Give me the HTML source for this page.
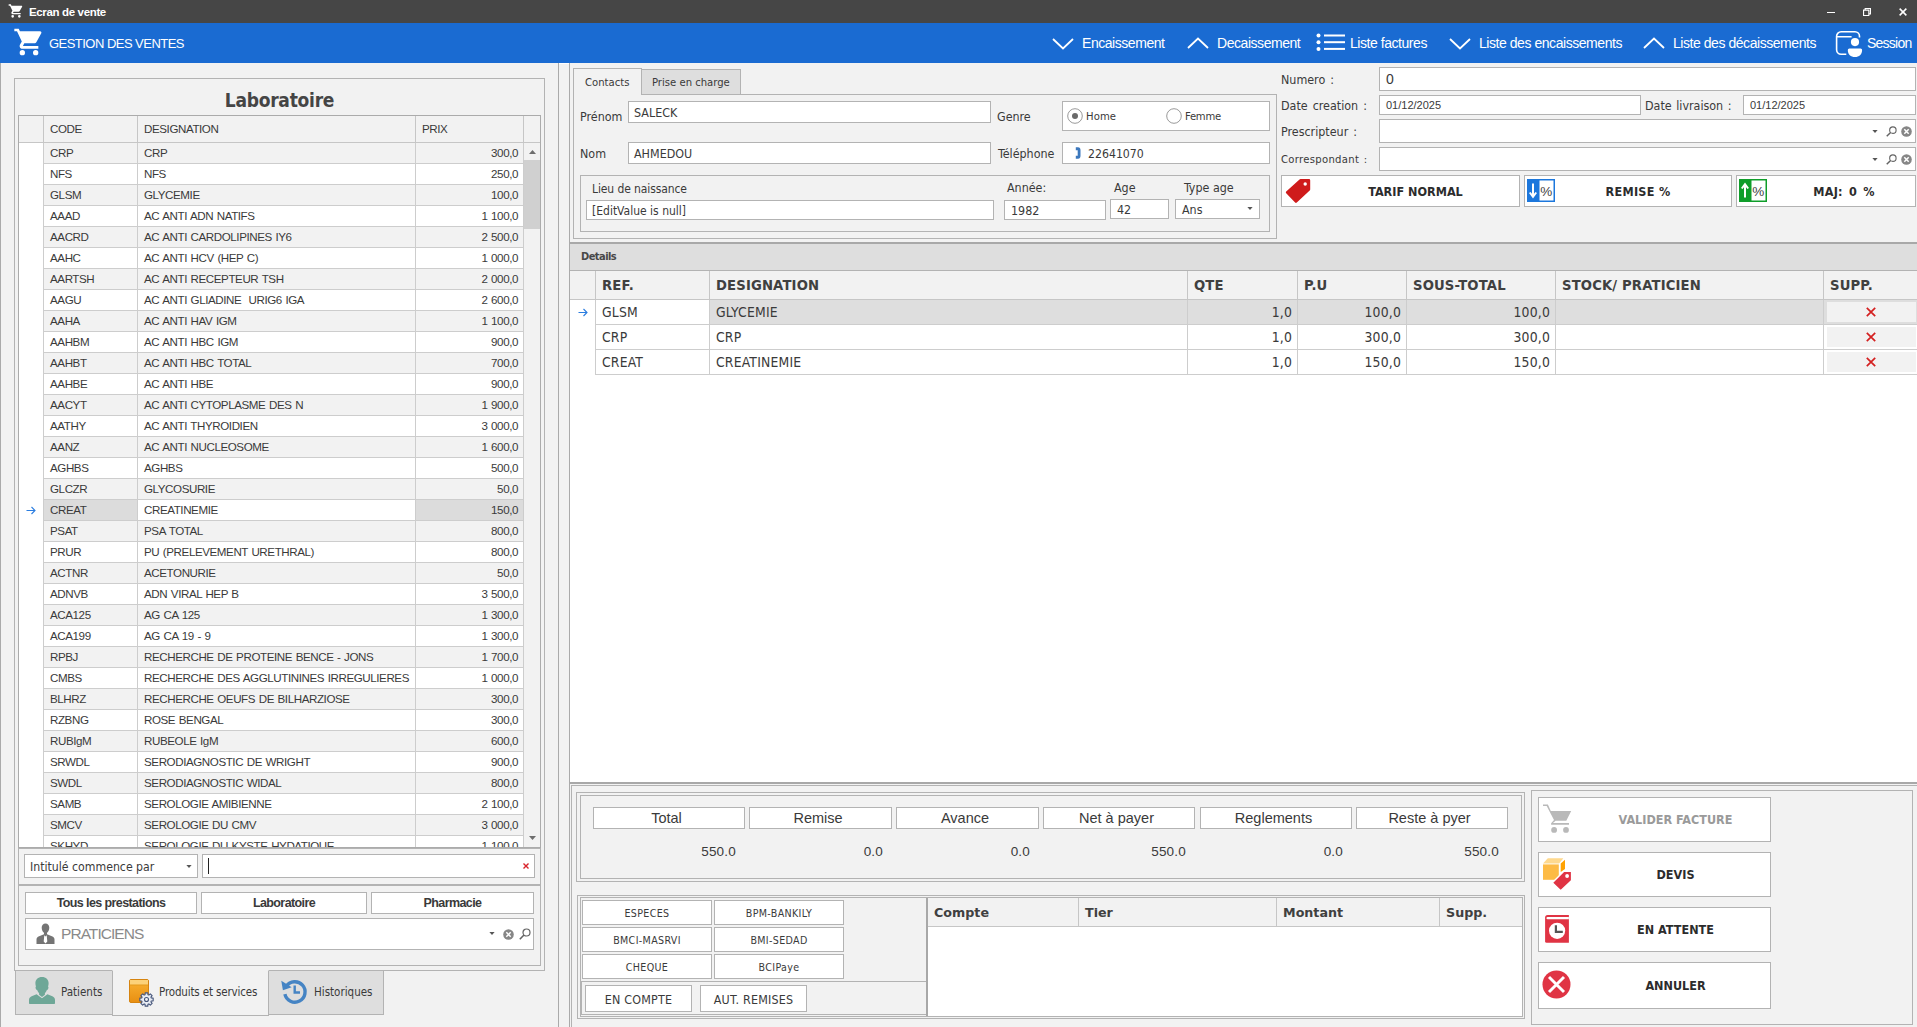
<!DOCTYPE html>
<html lang="fr">
<head>
<meta charset="utf-8">
<title>Ecran de vente</title>
<style>
*{box-sizing:border-box;margin:0;padding:0}
html,body{width:1917px;height:1027px;overflow:hidden;background:#f2f2f2}
body{position:relative;font-family:"Liberation Sans",sans-serif;color:#3a3a3a;font-size:12px}
i{font-style:normal}
.a{position:absolute}
.sg{font-family:"Liberation Sans",sans-serif}
.th{font-family:"DejaVu Sans Condensed","Liberation Sans",sans-serif}
.tb{font-family:"DejaVu Sans","Liberation Sans",sans-serif}
.lb.th{margin-top:1px}
.in.th{padding-top:1px}
.bx{position:absolute;border:1px solid #b3b3b3}
.in{position:absolute;border:1px solid #b3b3b3;background:#fff;white-space:nowrap;overflow:hidden}
svg{position:absolute;overflow:visible}
/* title + header */
#tb{left:0;top:0;width:1917px;height:23px;background:#464646}
#tb .t{left:29px;top:1px;line-height:23px;color:#fff;font-weight:bold;font-size:11.5px;letter-spacing:-0.35px}
#hb{left:0;top:23px;width:1917px;height:40px;background:#1a6bd2;color:#fff}
#hb .t{top:0;line-height:40px;font-size:14px;white-space:nowrap;letter-spacing:-0.45px}
/* left panel */
#lp{left:0;top:63px;width:559px;height:970px;border-left:1px solid #aaa;border-right:1px solid #aaa}
#gb{left:14px;top:78px;width:531px;height:893px}
#ttl{left:14px;top:86px;width:531px;text-align:center;font-weight:bold;font-size:19px;letter-spacing:-0.25px;line-height:28px;color:#454545;font-family:"DejaVu Sans Condensed","Liberation Sans",sans-serif}
#lg{left:18px;top:115px;width:523px;height:733px;border:1px solid #ababab;background:#fff;overflow:hidden}
#lg .hd{position:absolute;left:0;top:0;width:521px;height:27px;background:#f2f2f2;border-bottom:1px solid #c6c6c6}
#lg .hd i{position:absolute;top:0;height:26px;line-height:25px;border-left:1px solid #c6c6c6;padding-left:6px;font-size:11.6px;letter-spacing:-0.42px}
#lg .r{position:absolute;left:24px;width:481px;height:21px;border-bottom:1px solid #cdcdcd;font-size:11.6px;letter-spacing:-0.42px;word-spacing:0.8px;line-height:20px;white-space:nowrap}
#lg .r.e{background:#f2f2f2}
#lg .r.o{background:#fff}
#lg .r i{position:absolute;top:0;height:20px;border-left:1px solid #cdcdcd;padding-left:6px}
#lg .c1{left:0;width:94px}
#lg .c2{left:94px;width:278px}
#lg .c3{left:372px;width:109px;text-align:right;padding-right:5px;border-right:1px solid #cdcdcd}
#lg .r.f .c1,#lg .r.f .c3{background:#dcdcdc}
#lg .r.f .c2{background:#fff}
.btn{position:absolute;border:1px solid #b3b3b3;background:#fff;text-align:center;white-space:nowrap}
/* details grid */
.dh{position:absolute;top:271px;height:28px;line-height:29px;border-left:1px solid #c6c6c6;padding-left:6px;font-weight:bold;font-size:13.2px;letter-spacing:0.15px;color:#404040;white-space:nowrap}
.dr{position:absolute;left:595px;width:1322px;height:25px;border-bottom:1px solid #cdcdcd;font-size:13.8px;letter-spacing:0.2px;line-height:24px;white-space:nowrap}
.dr i{position:absolute;top:0;height:24px;border-left:1px solid #cdcdcd;padding-left:6px}
.dr .n{text-align:right;padding-right:5px}
.dr .xb{position:absolute;left:1232px;top:2px;width:89px;height:20px;background:#f2f2f2}
.lb{position:absolute;white-space:nowrap;font-size:12px}
.tot{position:absolute;top:807px;height:22px;border:1px solid #b3b3b3;background:#fff;text-align:center;font-size:14.5px;line-height:21px;letter-spacing:0;padding-right:5px}
.tv{position:absolute;top:842px;height:20px;line-height:20px;font-size:13.5px;letter-spacing:0.2px;text-align:right;white-space:nowrap}
.pb{position:absolute;height:25px;width:130px;border:1px solid #b3b3b3;background:#fff;text-align:center;font-size:10.6px;letter-spacing:0.35px;line-height:25px;white-space:nowrap}
.bb{position:absolute;left:1538px;width:233px;border:1px solid #b3b3b3;background:#fff}
.bb b{position:absolute;left:42px;right:0;top:0;text-align:center;font-size:12.5px;white-space:nowrap}
</style>
</head>
<body>
<!-- ===== title bar ===== -->
<div id="tb" class="a">
<svg style="left:8px;top:3px" width="16" height="16" viewBox="0 0 24 24"><path fill="#fff" d="M7 18a2 2 0 1 0 0 4 2 2 0 0 0 0-4zM1 2v2h2l3.6 7.6-1.4 2.4c-.7 1.4.3 3 1.8 3h12v-2H7.4l1.1-2h7.4c.8 0 1.400-.4 1.700-1l3.600-6.500c.4-.700-.100-1.500-.900-1.500H5.200L4.300 2H1zm16 16a2 2 0 1 0 0 4 2 2 0 0 0 0-4z"/></svg>
<div class="a t">Ecran de vente</div>
<svg style="left:1827px;top:12px" width="8" height="1"><rect width="8" height="1" fill="#fff"/></svg>
<svg style="left:1863px;top:8px" width="8" height="8" viewBox="0 0 10 10"><path d="M0.700 2.700h6.600v6.600h-6.600zM2.700 2.700v-2h6.600v6.600h-2" fill="none" stroke="#fff" stroke-width="1.400"/></svg>
<svg style="left:1899px;top:8px" width="8" height="8" viewBox="0 0 10 10"><path d="M0.800 0.800l8.400 8.400M9.200 0.800l-8.400 8.400" stroke="#fff" stroke-width="1.900" fill="none"/></svg>
</div>
<!-- ===== blue header ===== -->
<div id="hb" class="a">
<svg style="left:13px;top:3px" width="32" height="32" viewBox="0 0 24 24"><path fill="#fff" d="M7 18a2 2 0 1 0 0 4 2 2 0 0 0 0-4zM1 2v2h2l3.6 7.6-1.4 2.4c-.7 1.4.3 3 1.8 3h12v-2H7.4l1.1-2h7.4c.8 0 1.400-.4 1.700-1l3.600-6.500c.4-.700-.100-1.500-.900-1.500H5.200L4.300 2H1zm16 16a2 2 0 1 0 0 4 2 2 0 0 0 0-4z"/></svg>
<div class="a t" style="left:49px;top:1px;font-size:13px;letter-spacing:-0.53px">GESTION DES VENTES</div>
<svg style="left:1052px;top:15px" width="22" height="12" viewBox="0 0 22 12"><path d="M1 1l10 9.500L21 1" fill="none" stroke="#fff" stroke-width="1.800"/></svg>
<div class="a t" style="left:1082px">Encaissement</div>
<svg style="left:1187px;top:14px" width="22" height="12" viewBox="0 0 22 12"><path d="M1 11l10-9.500L21 11" fill="none" stroke="#fff" stroke-width="1.800"/></svg>
<div class="a t" style="left:1217px">Decaissement</div>
<svg style="left:1316px;top:10px" width="30" height="20" viewBox="0 0 30 20"><g fill="#fff"><circle cx="2.500" cy="2.500" r="2"/><circle cx="2.500" cy="9.200" r="2"/><circle cx="2.500" cy="15.900" r="2"/><rect x="8" y="1.500" width="21" height="2"/><rect x="8" y="8.200" width="21" height="2"/><rect x="8" y="14.900" width="21" height="2"/></g></svg>
<div class="a t" style="left:1350px">Liste factures</div>
<svg style="left:1449px;top:15px" width="22" height="12" viewBox="0 0 22 12"><path d="M1 1l10 9.500L21 1" fill="none" stroke="#fff" stroke-width="1.800"/></svg>
<div class="a t" style="left:1479px">Liste des encaissements</div>
<svg style="left:1643px;top:14px" width="22" height="12" viewBox="0 0 22 12"><path d="M1 11l10-9.500L21 11" fill="none" stroke="#fff" stroke-width="1.800"/></svg>
<div class="a t" style="left:1673px">Liste des décaissements</div>
<svg style="left:1835px;top:7px" width="28" height="28" viewBox="0 0 28 28"><path d="M11.300 24.200H6.100a4.500 4.500 0 0 1-4.500-4.500V6.300a4.500 4.500 0 0 1 4.500-4.500H20a4.500 4.500 0 0 1 4.500 4.500v1.200M1.600 6.700h15" fill="none" stroke="#fff" stroke-width="1.600"/><circle cx="20" cy="12.100" r="4.100" fill="#fff"/><path d="M14.300 18.400h11.300a1.500 1.500 0 0 1 1.500 1.500c0 4.500-3 7.100-7.150 7.100s-7.150-2.600-7.150-7.100a1.500 1.500 0 0 1 1.500-1.500z" fill="#fff"/></svg>
<div class="a t" style="left:1867px;letter-spacing:-0.75px">Session</div>
</div>

<!-- ===== LEFT PANEL ===== -->
<div id="lp" class="a"></div>
<div id="gb" class="bx"></div>
<div id="ttl" class="a">Laboratoire</div>
<div id="lg" class="a">
<div class="hd"><i style="left:24px;width:94px">CODE</i><i style="left:118px;width:278px">DESIGNATION</i><i style="left:396px;width:108px">PRIX</i><i style="left:504px;width:17px"></i></div>
<div class="r e" style="top:27px"><i class="c1">CRP</i><i class="c2">CRP</i><i class="c3">300,0</i></div>
<div class="r o" style="top:48px"><i class="c1">NFS</i><i class="c2">NFS</i><i class="c3">250,0</i></div>
<div class="r e" style="top:69px"><i class="c1">GLSM</i><i class="c2">GLYCEMIE</i><i class="c3">100,0</i></div>
<div class="r o" style="top:90px"><i class="c1">AAAD</i><i class="c2">AC ANTI ADN NATIFS</i><i class="c3">1 100,0</i></div>
<div class="r e" style="top:111px"><i class="c1">AACRD</i><i class="c2">AC ANTI CARDOLIPINES IY6</i><i class="c3">2 500,0</i></div>
<div class="r o" style="top:132px"><i class="c1">AAHC</i><i class="c2">AC ANTI HCV (HEP C)</i><i class="c3">1 000,0</i></div>
<div class="r e" style="top:153px"><i class="c1">AARTSH</i><i class="c2">AC ANTI RECEPTEUR TSH</i><i class="c3">2 000,0</i></div>
<div class="r o" style="top:174px"><i class="c1">AAGU</i><i class="c2">AC ANTI GLIADINE&nbsp; URIG6 IGA</i><i class="c3">2 600,0</i></div>
<div class="r e" style="top:195px"><i class="c1">AAHA</i><i class="c2">AC ANTI HAV IGM</i><i class="c3">1 100,0</i></div>
<div class="r o" style="top:216px"><i class="c1">AAHBM</i><i class="c2">AC ANTI HBC IGM</i><i class="c3">900,0</i></div>
<div class="r e" style="top:237px"><i class="c1">AAHBT</i><i class="c2">AC ANTI HBC TOTAL</i><i class="c3">700,0</i></div>
<div class="r o" style="top:258px"><i class="c1">AAHBE</i><i class="c2">AC ANTI HBE</i><i class="c3">900,0</i></div>
<div class="r e" style="top:279px"><i class="c1">AACYT</i><i class="c2">AC ANTI CYTOPLASME DES N</i><i class="c3">1 900,0</i></div>
<div class="r o" style="top:300px"><i class="c1">AATHY</i><i class="c2">AC ANTI THYROIDIEN</i><i class="c3">3 000,0</i></div>
<div class="r e" style="top:321px"><i class="c1">AANZ</i><i class="c2">AC ANTI NUCLEOSOME</i><i class="c3">1 600,0</i></div>
<div class="r o" style="top:342px"><i class="c1">AGHBS</i><i class="c2">AGHBS</i><i class="c3">500,0</i></div>
<div class="r e" style="top:363px"><i class="c1">GLCZR</i><i class="c2">GLYCOSURIE</i><i class="c3">50,0</i></div>
<div class="r o f" style="top:384px"><i class="c1">CREAT</i><i class="c2">CREATINEMIE</i><i class="c3">150,0</i></div>
<div class="r e" style="top:405px"><i class="c1">PSAT</i><i class="c2">PSA TOTAL</i><i class="c3">800,0</i></div>
<div class="r o" style="top:426px"><i class="c1">PRUR</i><i class="c2">PU (PRELEVEMENT URETHRAL)</i><i class="c3">800,0</i></div>
<div class="r e" style="top:447px"><i class="c1">ACTNR</i><i class="c2">ACETONURIE</i><i class="c3">50,0</i></div>
<div class="r o" style="top:468px"><i class="c1">ADNVB</i><i class="c2">ADN VIRAL HEP B</i><i class="c3">3 500,0</i></div>
<div class="r e" style="top:489px"><i class="c1">ACA125</i><i class="c2">AG CA 125</i><i class="c3">1 300,0</i></div>
<div class="r o" style="top:510px"><i class="c1">ACA199</i><i class="c2">AG CA 19 - 9</i><i class="c3">1 300,0</i></div>
<div class="r e" style="top:531px"><i class="c1">RPBJ</i><i class="c2">RECHERCHE DE PROTEINE BENCE - JONS</i><i class="c3">1 700,0</i></div>
<div class="r o" style="top:552px"><i class="c1">CMBS</i><i class="c2">RECHERCHE DES AGGLUTININES IRREGULIERES</i><i class="c3">1 000,0</i></div>
<div class="r e" style="top:573px"><i class="c1">BLHRZ</i><i class="c2">RECHERCHE OEUFS DE BILHARZIOSE</i><i class="c3">300,0</i></div>
<div class="r o" style="top:594px"><i class="c1">RZBNG</i><i class="c2">ROSE BENGAL</i><i class="c3">300,0</i></div>
<div class="r e" style="top:615px"><i class="c1">RUBIgM</i><i class="c2">RUBEOLE IgM</i><i class="c3">600,0</i></div>
<div class="r o" style="top:636px"><i class="c1">SRWDL</i><i class="c2">SERODIAGNOSTIC DE WRIGHT</i><i class="c3">900,0</i></div>
<div class="r e" style="top:657px"><i class="c1">SWDL</i><i class="c2">SERODIAGNOSTIC WIDAL</i><i class="c3">800,0</i></div>
<div class="r o" style="top:678px"><i class="c1">SAMB</i><i class="c2">SEROLOGIE AMIBIENNE</i><i class="c3">2 100,0</i></div>
<div class="r e" style="top:699px"><i class="c1">SMCV</i><i class="c2">SEROLOGIE DU CMV</i><i class="c3">3 000,0</i></div>
<div class="r o" style="top:720px"><i class="c1">SKHYD</i><i class="c2">SEROLOGIE DU KYSTE HYDATIQUE</i><i class="c3">1 100,0</i></div>
<svg style="left:7px;top:390px" width="10" height="9" viewBox="0 0 10 9"><path d="M0.500 4.500h8.500M5.500 1l3.500 3.500-3.500 3.500" fill="none" stroke="#2b7de0" stroke-width="1.100"/></svg>
<!-- scrollbar -->
<div class="a" style="left:505px;top:27px;width:17px;height:705px;background:#f2f2f2"></div>
<div class="a" style="left:505px;top:44px;width:17px;height:69px;background:#d0d0d0"></div>
<svg style="left:510px;top:34px" width="7" height="4" viewBox="0 0 9 5"><path d="M0 5l4.500-5L9 5z" fill="#6e6e6e"/></svg>
<svg style="left:510px;top:720px" width="7" height="4" viewBox="0 0 9 5"><path d="M0 0l4.500 5L9 0z" fill="#6e6e6e"/></svg>
</div>
<!-- search panel -->
<div class="bx" style="left:18px;top:848px;width:523px;height:37px"></div>
<div class="in th" style="left:24px;top:854px;width:174px;height:24px;font-size:12.200px;line-height:22px;padding-left:5px">Intitulé commence par</div>
<svg style="left:186px;top:865px" width="6" height="3" viewBox="0 0 7 4"><path d="M0 0h7L3.500 4z" fill="#555"/></svg>
<div class="in" style="left:202px;top:854px;width:333px;height:24px"></div>
<div class="a" style="left:208px;top:858px;width:1px;height:16px;background:#222"></div>
<svg style="left:523px;top:863px" width="6" height="6" viewBox="0 0 6 6"><path d="M0.500 0.500l5 5M5.500 0.500l-5 5" stroke="#d8232a" stroke-width="1.400" fill="none"/></svg>
<!-- category panel -->
<div class="bx" style="left:18px;top:885px;width:523px;height:81px"></div>
<div class="btn" style="left:25px;top:892px;width:172px;height:22px;font-weight:bold;font-size:12.5px;line-height:20px;letter-spacing:-0.6px">Tous les prestations</div>
<div class="btn" style="left:201px;top:892px;width:166px;height:22px;font-weight:bold;font-size:12.5px;line-height:20px;letter-spacing:-0.6px">Laboratoire</div>
<div class="btn" style="left:371px;top:892px;width:163px;height:22px;font-weight:bold;font-size:12.5px;line-height:20px;letter-spacing:-0.6px">Pharmacie</div>
<div class="in" style="left:25px;top:918px;width:509px;height:32px;font-size:15.5px;line-height:30px;padding-left:35px;color:#8a8a8a;letter-spacing:-0.95px">PRATICIENS</div>
<svg style="left:36px;top:923px" width="19" height="22" viewBox="0 0 19 22"><path fill="#747474" d="M9.500 0.500c2.300 0 3.800 1.700 3.800 4.200 0 2-1 4.300-2.300 5.100v1.500l5.500 2.200c1.200.5 2 1.600 2 2.900V21H0.500v-4.600c0-1.300.8-2.400 2-2.900L8 11.300V9.800C6.700 9 5.700 6.700 5.700 4.700c0-2.500 1.500-4.200 3.800-4.200z"/><path d="M8.300 12.200l1.200 1.300 1.200-1.300 0.600 6.300-1.800 2-1.800-2z" fill="#fff"/></svg>
<svg style="left:489px;top:932px" width="6" height="3" viewBox="0 0 7 4"><path d="M0 0h7L3.500 4z" fill="#555"/></svg>
<svg style="left:503px;top:929px" width="11" height="11" viewBox="0 0 11 11"><circle cx="5.500" cy="5.500" r="5.300" fill="#868686"/><path d="M3.300 3.300l4.400 4.400M7.700 3.300l-4.400 4.400" stroke="#fff" stroke-width="1.500"/></svg>
<svg style="left:519px;top:928px" width="12" height="12" viewBox="0 0 12 12"><circle cx="7.500" cy="4.500" r="3.500" fill="none" stroke="#636363" stroke-width="1.200"/><path d="M5 7L0.800 11.200" stroke="#636363" stroke-width="1.600"/></svg>
<!-- bottom tabs -->
<div class="a" style="left:15px;top:970px;width:98px;height:45px;background:#dedede;border:1px solid #b3b3b3"></div>
<div class="a" style="left:268px;top:970px;width:116px;height:45px;background:#dedede;border:1px solid #b3b3b3"></div>
<div class="a" style="left:112px;top:970px;width:157px;height:46px;background:#f2f2f2;border:1px solid #b3b3b3;border-top-color:#f2f2f2"></div>
<svg style="left:28px;top:976px" width="28" height="29" viewBox="0 0 28 29"><path fill="#6ea797" d="M14 1c4 0 6.600 2.600 6.600 6.200 0 1.300-.2 2.300-.6 3.400.5.300.6 1.200.2 2.100-.3.800-.8 1.300-1.300 1.400-.5 1.300-1.200 2.400-2 3.100v1.600l-2.900 2.200-2.900-2.200v-1.600c-.8-.700-1.500-1.800-2-3.100-.5-.100-1-.6-1.300-1.400-.4-.900-.3-1.800.2-2.100-.4-1.100-.6-2.100-.6-3.400C7.400 3.600 10 1 14 1zM8.600 18.200l5.400 4.100 5.400-4.100 5 2c1.600.7 2.600 2.100 2.600 3.800v3c0 .6-.4 1-1 1H2c-.6 0-1-.4-1-1v-3c0-1.700 1-3.100 2.600-3.800z"/></svg>
<div class="lb th" style="left:61px;top:983px;font-size:11.5px;line-height:16px">Patients</div>
<svg style="left:127px;top:977px" width="28" height="31" viewBox="0 0 28 31"><defs><linearGradient id="og" x1="0" y1="0" x2="0" y2="1"><stop offset="0" stop-color="#f9b233"/><stop offset="1" stop-color="#e88f12"/></linearGradient></defs><rect x="2.500" y="2.500" width="19" height="23" rx="1.500" fill="url(#og)" stroke="#d68410" stroke-width="1"/><rect x="3" y="3" width="18" height="5" fill="#fcd27a"/><rect x="3" y="7.500" width="18" height="1" fill="#e39a1c"/><path d="M24.29 21.07L26.17 21.17L26.17 23.83L24.29 23.93L23.90 24.87L25.15 26.28L23.28 28.15L21.87 26.90L20.93 27.29L20.83 29.17L18.17 29.17L18.07 27.29L17.13 26.90L15.72 28.15L13.85 26.28L15.10 24.87L14.71 23.93L12.83 23.83L12.83 21.17L14.71 21.07L15.10 20.13L13.85 18.72L15.72 16.85L17.13 18.10L18.07 17.71L18.17 15.83L20.83 15.83L20.93 17.71L21.87 18.10L23.28 16.85L25.15 18.72L23.90 20.13z" fill="#e9edf4" stroke="#45557a" stroke-width="1.100" stroke-linejoin="round"/><circle cx="19.500" cy="22.500" r="2" fill="#f2f2f2" stroke="#45557a" stroke-width="1.100"/></svg>
<div class="lb th" style="left:159px;top:983px;font-size:11.500px;line-height:16px;letter-spacing:-0.15px">Produits et services</div>
<svg style="left:281px;top:978px" width="27" height="27" viewBox="0 0 27 27"><path d="M5.400 8.300A10.200 10.200 0 1 1 3.900 16.200" fill="none" stroke="#4584c4" stroke-width="3.400"/><path d="M0.300 2.800l1.600 9.400 8.800-3z" fill="#4584c4"/><path d="M13.700 7.500v7h5.300" fill="none" stroke="#4584c4" stroke-width="2.400"/></svg>
<div class="lb th" style="left:314px;top:983px;font-size:11.500px;line-height:16px">Historiques</div>

<!-- ===== RIGHT PANEL ===== -->
<div class="a" style="left:559px;top:63px;width:10px;height:1px;background:#fff"></div>
<div class="a" style="left:569px;top:63px;width:1px;height:964px;background:#aaa"></div>
<!-- contact tabs -->
<div class="a" style="left:641px;top:69px;width:100px;height:26px;background:#dedede;border:1px solid #b3b3b3"></div>
<div class="bx" style="left:573px;top:94px;width:704px;height:145px"></div>
<div class="a" style="left:573px;top:68px;width:69px;height:26px;background:#f2f2f2;border:1px solid #b3b3b3;border-bottom:none"></div><div class="a" style="left:574px;top:94px;width:67px;height:1px;background:#f2f2f2"></div>
<div class="lb th" style="left:585px;top:74px;font-size:11.2px;line-height:16px">Contacts</div>
<div class="lb th" style="left:652px;top:74px;font-size:11.2px;line-height:16px">Prise en charge</div>
<div class="lb th" style="left:580px;top:108px;font-size:12.4px;line-height:16px">Prénom</div>
<div class="in th" style="left:628px;top:101px;width:363px;height:22px;font-size:12.4px;line-height:20px;padding-left:5px">SALECK</div>
<div class="lb th" style="left:997px;top:108px;font-size:12.4px;line-height:16px">Genre</div>
<div class="in" style="left:1062px;top:101px;width:208px;height:30px"></div>
<svg style="left:1067px;top:108px" width="16" height="16" viewBox="0 0 16 16"><circle cx="8" cy="8" r="7.300" fill="#fff" stroke="#9a9a9a" stroke-width="1"/><circle cx="8" cy="8" r="3" fill="#6a6a6a"/></svg>
<div class="lb th" style="left:1086px;top:108px;font-size:11.2px;line-height:16px;letter-spacing:0.1px">Home</div>
<svg style="left:1166px;top:108px" width="16" height="16" viewBox="0 0 16 16"><circle cx="8" cy="8" r="7.300" fill="#fff" stroke="#9a9a9a" stroke-width="1"/></svg>
<div class="lb th" style="left:1185px;top:108px;font-size:11.2px;line-height:16px;letter-spacing:-0.25px">Femme</div>
<div class="lb th" style="left:580px;top:145px;font-size:12.4px;line-height:16px">Nom</div>
<div class="in th" style="left:628px;top:142px;width:363px;height:22px;font-size:12.4px;line-height:20px;padding-left:5px">AHMEDOU</div>
<div class="lb th" style="left:998px;top:145px;font-size:12.4px;line-height:16px">Téléphone</div>
<div class="in th" style="left:1062px;top:142px;width:208px;height:22px;font-size:12.2px;line-height:20px;padding-left:25px">22641070</div>
<svg style="left:1075px;top:147px" width="6" height="12" viewBox="0 0 6 12"><path d="M0.800 0.300h2.200q2.500 0.200 2.500 3v5.400q0 2.800-2.500 3H0.800V8.700h1.900V3.300H0.800z" fill="#3c78bd"/></svg>
<div class="bx" style="left:580px;top:175px;width:690px;height:57px"></div>
<div class="lb th" style="left:592px;top:180px;font-size:12px;letter-spacing:-0.1px;line-height:16px">Lieu de naissance</div>
<div class="in th" style="left:586px;top:200px;width:408px;height:20px;font-size:12px;line-height:18px;padding-left:5px">[EditValue is null]</div>
<div class="lb th" style="left:1007px;top:179px;font-size:12.4px;line-height:16px">Année:</div>
<div class="in th" style="left:1004px;top:200px;width:102px;height:20px;font-size:12.4px;line-height:18px;padding-left:6px">1982</div>
<div class="lb th" style="left:1114px;top:179px;font-size:12.4px;line-height:16px">Age</div>
<div class="in th" style="left:1110px;top:199px;width:59px;height:20px;font-size:12.4px;line-height:18px;padding-left:6px">42</div>
<div class="lb th" style="left:1184px;top:179px;font-size:12.4px;line-height:16px">Type age</div>
<div class="in th" style="left:1175px;top:199px;width:85px;height:20px;font-size:12.4px;line-height:18px;padding-left:6px">Ans</div>
<svg style="left:1247px;top:207px" width="6" height="3" viewBox="0 0 7 4"><path d="M0 0h7L3.500 4z" fill="#555"/></svg>
<!-- right column -->
<div class="lb th" style="left:1281px;top:71px;font-size:12.4px;line-height:16px;word-spacing:1.5px">Numero :</div>
<div class="in" style="left:1379px;top:67px;width:537px;height:24px;font-size:14px;line-height:22px;padding-left:6px">0</div>
<div class="lb th" style="left:1281px;top:97px;font-size:12.4px;line-height:16px;word-spacing:1.5px">Date creation :</div>
<div class="in" style="left:1379px;top:95px;width:262px;height:20px;font-size:11px;line-height:18px;padding-left:6px">01/12/2025</div>
<div class="lb th" style="left:1645px;top:97px;font-size:12.4px;line-height:16px;word-spacing:1px">Date livraison :</div>
<div class="in" style="left:1743px;top:95px;width:173px;height:20px;font-size:11px;line-height:18px;padding-left:6px">01/12/2025</div>
<div class="lb th" style="left:1281px;top:123px;font-size:12.4px;line-height:16px;word-spacing:1.5px">Prescripteur :</div>
<div class="in" style="left:1379px;top:119px;width:537px;height:24px"></div>
<div class="lb th" style="left:1281px;top:151px;font-size:11.2px;line-height:16px;letter-spacing:0.3px;word-spacing:1px">Correspondant :</div>
<div class="in" style="left:1379px;top:147px;width:537px;height:24px"></div>
<svg style="left:1872px;top:130px" width="6" height="3" viewBox="0 0 7 4"><path d="M0 0h7L3.500 4z" fill="#555"/></svg>
<svg style="left:1886px;top:126px" width="11" height="11" viewBox="0 0 12 12"><circle cx="7.500" cy="4.500" r="3.500" fill="none" stroke="#636363" stroke-width="1.200"/><path d="M5 7L0.800 11.200" stroke="#636363" stroke-width="1.600"/></svg>
<svg style="left:1901px;top:126px" width="11" height="11" viewBox="0 0 11 11"><circle cx="5.500" cy="5.500" r="5.300" fill="#868686"/><path d="M3.300 3.300l4.400 4.400M7.700 3.300l-4.400 4.400" stroke="#fff" stroke-width="1.500"/></svg>
<svg style="left:1872px;top:158px" width="6" height="3" viewBox="0 0 7 4"><path d="M0 0h7L3.500 4z" fill="#555"/></svg>
<svg style="left:1886px;top:154px" width="11" height="11" viewBox="0 0 12 12"><circle cx="7.500" cy="4.500" r="3.500" fill="none" stroke="#636363" stroke-width="1.200"/><path d="M5 7L0.800 11.200" stroke="#636363" stroke-width="1.600"/></svg>
<svg style="left:1901px;top:154px" width="11" height="11" viewBox="0 0 11 11"><circle cx="5.500" cy="5.500" r="5.300" fill="#868686"/><path d="M3.300 3.300l4.400 4.400M7.700 3.300l-4.400 4.400" stroke="#fff" stroke-width="1.500"/></svg>
<!-- tarif buttons -->
<div class="btn th" style="left:1281px;top:175px;width:239px;height:32px;font-weight:bold;font-size:12.5px;line-height:32px;padding-left:30px;color:#2c2c2c">TARIF NORMAL</div>
<svg style="left:1285px;top:178px" width="26" height="26" viewBox="0 0 26 26"><path d="M15.500 1h8.500a1.200 1.200 0 0 1 1.200 1.200v9.300a1.500 1.500 0 0 1-.5 1L11.800 24.600a1.200 1.200 0 0 1-1.700 0L1.200 15.300a1.200 1.200 0 0 1 0-1.700L14.500 1.400a1.500 1.500 0 0 1 1-.4z" fill="#cf1b1b"/><circle cx="20.200" cy="6" r="1.700" fill="#fff"/></svg>
<div class="btn th" style="left:1524px;top:175px;width:208px;height:32px;font-weight:bold;font-size:12.5px;line-height:32px;padding-left:20px;letter-spacing:0.3px;color:#2c2c2c">REMISE %</div>
<svg style="left:1527px;top:179px" width="28" height="23" viewBox="0 0 28 23"><rect x="0" y="0" width="28" height="23" fill="#1c77dc"/><rect x="12.500" y="1.500" width="14" height="20" fill="#fff"/><path d="M6 4.500v13M2.800 13.500L6 17.800l3.200-4.300" fill="none" stroke="#fff" stroke-width="2"/><text x="13.300" y="16.500" font-size="13.500" font-family="Liberation Sans,sans-serif" fill="#444">%</text></svg>
<div class="btn th" style="left:1736px;top:175px;width:180px;height:32px;font-weight:bold;font-size:12.5px;line-height:32px;padding-left:36px;letter-spacing:0.25px;word-spacing:2px;color:#2c2c2c">MAJ: 0 %</div>
<svg style="left:1739px;top:179px" width="28" height="23" viewBox="0 0 28 23"><rect x="0" y="0" width="28" height="23" fill="#0f9d2a"/><rect x="12.500" y="1.500" width="14" height="20" fill="#fff"/><path d="M6 18.500V5.500M2.800 9.500L6 5.200l3.200 4.300" fill="none" stroke="#fff" stroke-width="2"/><text x="13.300" y="16.500" font-size="13.500" font-family="Liberation Sans,sans-serif" fill="#444">%</text></svg>

<!-- ===== DETAILS ===== -->
<div class="a" style="left:570px;top:242px;width:1347px;height:2px;background:#a8a8a8"></div>
<div class="a" style="left:570px;top:244px;width:1347px;height:26px;background:#dedede"></div>
<div class="a" style="left:570px;top:270px;width:1347px;height:1px;background:#b3b3b3"></div>
<div class="lb th" style="left:581px;top:248px;font-size:11px;line-height:16px;font-weight:bold;letter-spacing:-0.55px;color:#484848">Details</div>
<div class="a" style="left:570px;top:300px;width:1347px;height:482px;background:#fff"></div>
<div class="a" style="left:570px;top:299px;width:1347px;height:1px;background:#c6c6c6"></div>
<div class="dh tb" style="left:595px;width:114px">REF.</div>
<div class="dh tb" style="left:709px;width:478px">DESIGNATION</div>
<div class="dh tb" style="left:1187px;width:110px">QTE</div>
<div class="dh tb" style="left:1297px;width:109px">P.U</div>
<div class="dh tb" style="left:1406px;width:149px">SOUS-TOTAL</div>
<div class="dh tb" style="left:1555px;width:268px">STOCK/ PRATICIEN</div>
<div class="dh tb" style="left:1823px;width:94px">SUPP.</div>
<div class="dr th" style="top:300px"><i style="left:0;width:114px">GLSM</i><i style="left:114px;width:478px;background:#dedede">GLYCEMIE</i><i class="n" style="left:592px;width:110px;background:#dedede">1,0</i><i class="n" style="left:702px;width:109px;background:#dedede">100,0</i><i class="n" style="left:811px;width:149px;background:#dedede">100,0</i><i style="left:960px;width:268px;background:#dedede"></i><i style="left:1228px;width:94px;background:#dedede"></i><span class="xb"></span></div>
<div class="dr th" style="top:325px"><i style="left:0;width:114px">CRP</i><i style="left:114px;width:478px">CRP</i><i class="n" style="left:592px;width:110px">1,0</i><i class="n" style="left:702px;width:109px">300,0</i><i class="n" style="left:811px;width:149px">300,0</i><i style="left:960px;width:268px"></i><i style="left:1228px;width:94px"></i><span class="xb"></span></div>
<div class="dr th" style="top:350px"><i style="left:0;width:114px">CREAT</i><i style="left:114px;width:478px">CREATINEMIE</i><i class="n" style="left:592px;width:110px">1,0</i><i class="n" style="left:702px;width:109px">150,0</i><i class="n" style="left:811px;width:149px">150,0</i><i style="left:960px;width:268px"></i><i style="left:1228px;width:94px"></i><span class="xb"></span></div>
<svg style="left:578px;top:308px" width="10" height="9" viewBox="0 0 10 9"><path d="M0.500 4.500h8.500M5.500 1l3.500 3.500-3.500 3.500" fill="none" stroke="#2b7de0" stroke-width="1.100"/></svg>
<svg style="left:1866px;top:307px" width="10" height="10" viewBox="0 0 10 10"><path d="M0.800 0.800l8.400 8.400M9.200 0.800l-8.400 8.400" stroke="#d42020" stroke-width="1.700" fill="none"/></svg>
<svg style="left:1866px;top:332px" width="10" height="10" viewBox="0 0 10 10"><path d="M0.800 0.800l8.400 8.400M9.200 0.800l-8.400 8.400" stroke="#d42020" stroke-width="1.700" fill="none"/></svg>
<svg style="left:1866px;top:357px" width="10" height="10" viewBox="0 0 10 10"><path d="M0.800 0.800l8.400 8.400M9.200 0.800l-8.400 8.400" stroke="#d42020" stroke-width="1.700" fill="none"/></svg>

<!-- ===== BOTTOM ===== -->
<div class="a" style="left:570px;top:782px;width:1347px;height:2px;background:#a8a8a8"></div>
<div class="a" style="left:571px;top:785px;width:1346px;height:250px;border:1px solid #b3b3b3;border-right:none"></div>
<!-- totals -->
<div class="bx" style="left:576px;top:792px;width:949px;height:90px"></div>
<div class="bx" style="left:580px;top:795px;width:942px;height:84px"></div>
<div class="tot" style="left:593px;width:152px">Total</div>
<div class="tot" style="left:749px;width:143px">Remise</div>
<div class="tot" style="left:896px;width:143px">Avance</div>
<div class="tot" style="left:1043px;width:152px">Net à payer</div>
<div class="tot" style="left:1200px;width:152px">Reglements</div>
<div class="tot" style="left:1356px;width:152px">Reste à pyer</div>
<div class="tv" style="left:593px;width:143px">550.0</div>
<div class="tv" style="left:749px;width:134px">0.0</div>
<div class="tv" style="left:896px;width:134px">0.0</div>
<div class="tv" style="left:1043px;width:143px">550.0</div>
<div class="tv" style="left:1200px;width:143px">0.0</div>
<div class="tv" style="left:1356px;width:143px">550.0</div>
<!-- payments -->
<div class="bx" style="left:577px;top:895px;width:948px;height:124px"></div>
<div class="bx" style="left:580px;top:897px;width:943px;height:120px"></div>
<div class="pb th" style="left:582px;top:900px">ESPECES</div>
<div class="pb th" style="left:714px;top:900px">BPM-BANKILY</div>
<div class="pb th" style="left:582px;top:927px">BMCI-MASRVI</div>
<div class="pb th" style="left:714px;top:927px">BMI-SEDAD</div>
<div class="pb th" style="left:582px;top:954px">CHEQUE</div>
<div class="pb th" style="left:714px;top:954px">BCIPaye</div>
<div class="bx" style="left:581px;top:981px;width:346px;height:34px"></div>
<div class="pb th" style="left:585px;top:985px;width:107px;height:27px;font-size:12.4px;letter-spacing:0.2px;line-height:27px">EN COMPTE</div>
<div class="pb th" style="left:700px;top:985px;width:107px;height:27px;font-size:12.4px;letter-spacing:0.2px;line-height:27px">AUT. REMISES</div>
<div class="a" style="left:926px;top:898px;width:2px;height:118px;background:#a8a8a8"></div>
<div class="a" style="left:928px;top:898px;width:594px;height:118px;background:#fff"></div>
<div class="a" style="left:928px;top:898px;width:594px;height:29px;background:#f2f2f2;border-bottom:1px solid #c6c6c6"></div>
<div class="lb tb" style="left:934px;top:904px;font-size:12.7px;line-height:18px;font-weight:bold;color:#404040">Compte</div>
<div class="a" style="left:1078px;top:898px;width:1px;height:28px;background:#c6c6c6"></div>
<div class="lb tb" style="left:1085px;top:904px;font-size:12.7px;line-height:18px;font-weight:bold;color:#404040">Tier</div>
<div class="a" style="left:1276px;top:898px;width:1px;height:28px;background:#c6c6c6"></div>
<div class="lb tb" style="left:1283px;top:904px;font-size:12.7px;line-height:18px;font-weight:bold;color:#404040">Montant</div>
<div class="a" style="left:1439px;top:898px;width:1px;height:28px;background:#c6c6c6"></div>
<div class="lb tb" style="left:1446px;top:904px;font-size:12.7px;line-height:18px;font-weight:bold;color:#404040">Supp.</div>
<!-- big buttons -->
<div class="bx" style="left:1531px;top:790px;width:382px;height:235px"></div>
<div class="bb th" style="top:797px;height:45px"><b style="line-height:43px;color:#9a9a9a">VALIDER FACTURE</b></div>
<div class="bb th" style="top:852px;height:45px"><b style="line-height:43px;color:#2c2c2c">DEVIS</b></div>
<div class="bb th" style="top:907px;height:45px"><b style="line-height:43px;color:#2c2c2c">EN ATTENTE</b></div>
<div class="bb th" style="top:962px;height:47px"><b style="line-height:45px;color:#2c2c2c">ANNULER</b></div>
<svg style="left:1535px;top:795px" width="45" height="45" viewBox="0 0 45 45"><g fill="#b9b9b9"><path d="M8 9.400h4.900l2.900 6.700h20.400l-4.900 9.700H20.600l-2.700 2.200h16.100v1.800H16.100v-1.500l2.900-3.200L11.700 11.100H8z"/><circle cx="19.100" cy="34.900" r="2.900"/><circle cx="31" cy="34.900" r="2.900"/></g></svg>
<svg style="left:1535px;top:850px" width="45" height="45" viewBox="0 0 45 45"><rect x="8" y="14.400" width="15.800" height="15.400" fill="#fdbb45"/><path d="M8 13.500l4.800-5.300h15.600l-4.300 5.300z" fill="#fed98e"/><path d="M25.700 13.500l4.300-3.700v9.100l-4.300 3.200z" fill="#ffa200"/><path d="M17.300 32.800l8.400 8 10.900-10.400v-9h-8z" fill="#e03444" stroke="#fff" stroke-width="1.400" stroke-linejoin="miter"/><circle cx="32.100" cy="26" r="1.900" fill="#fff"/></svg>
<svg style="left:1535px;top:905px" width="45" height="45" viewBox="0 0 45 45"><path d="M12.600 10.100h21.300v27.700H11.600a1.500 1.500 0 0 1-1.500-1.500V12.600a2.500 2.500 0 0 1 2.500-2.500z" fill="#e03444"/><path d="M12.600 12h21.300v2.300H12.600a1.150 1.150 0 0 1 0-2.300z" fill="#fff"/><circle cx="22.100" cy="25.800" r="8.100" fill="#fff"/><path d="M20.900 20.200v6.700h6.900" fill="none" stroke="#555" stroke-width="2.200"/></svg>
<svg style="left:1542px;top:970px" width="29" height="29" viewBox="0 0 29 29"><circle cx="14.500" cy="14.500" r="14" fill="#e03444"/><path d="M7 7l15 15M22 7l-15 15" stroke="#fff" stroke-width="2.900"/></svg>
</body>
</html>
